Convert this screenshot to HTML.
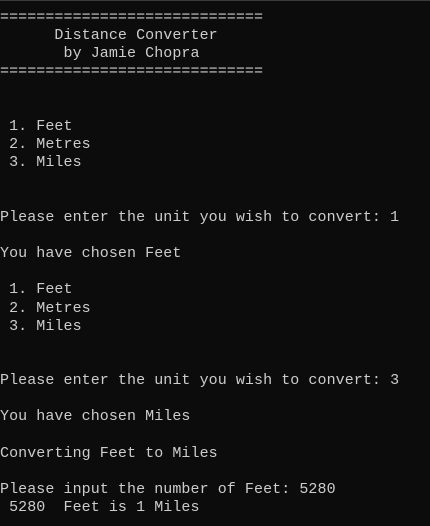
<!DOCTYPE html>
<html><head><meta charset="utf-8"><style>
html,body{margin:0;padding:0;background:#0c0c0c;}
body{width:430px;height:526px;overflow:hidden;border-top:1px solid #3a3a3a;box-sizing:border-box;}
pre{margin:0;position:absolute;left:0;top:9px;font-family:"Liberation Mono",monospace;font-size:15px;letter-spacing:0.07px;line-height:18.15px;color:#cccccc;}
</style></head><body><pre>=============================
      Distance Converter
       by Jamie Chopra
=============================


 1. Feet
 2. Metres
 3. Miles


Please enter the unit you wish to convert: 1

You have chosen Feet

 1. Feet
 2. Metres
 3. Miles


Please enter the unit you wish to convert: 3

You have chosen Miles

Converting Feet to Miles

Please input the number of Feet: 5280
 5280  Feet is 1 Miles</pre></body></html>
